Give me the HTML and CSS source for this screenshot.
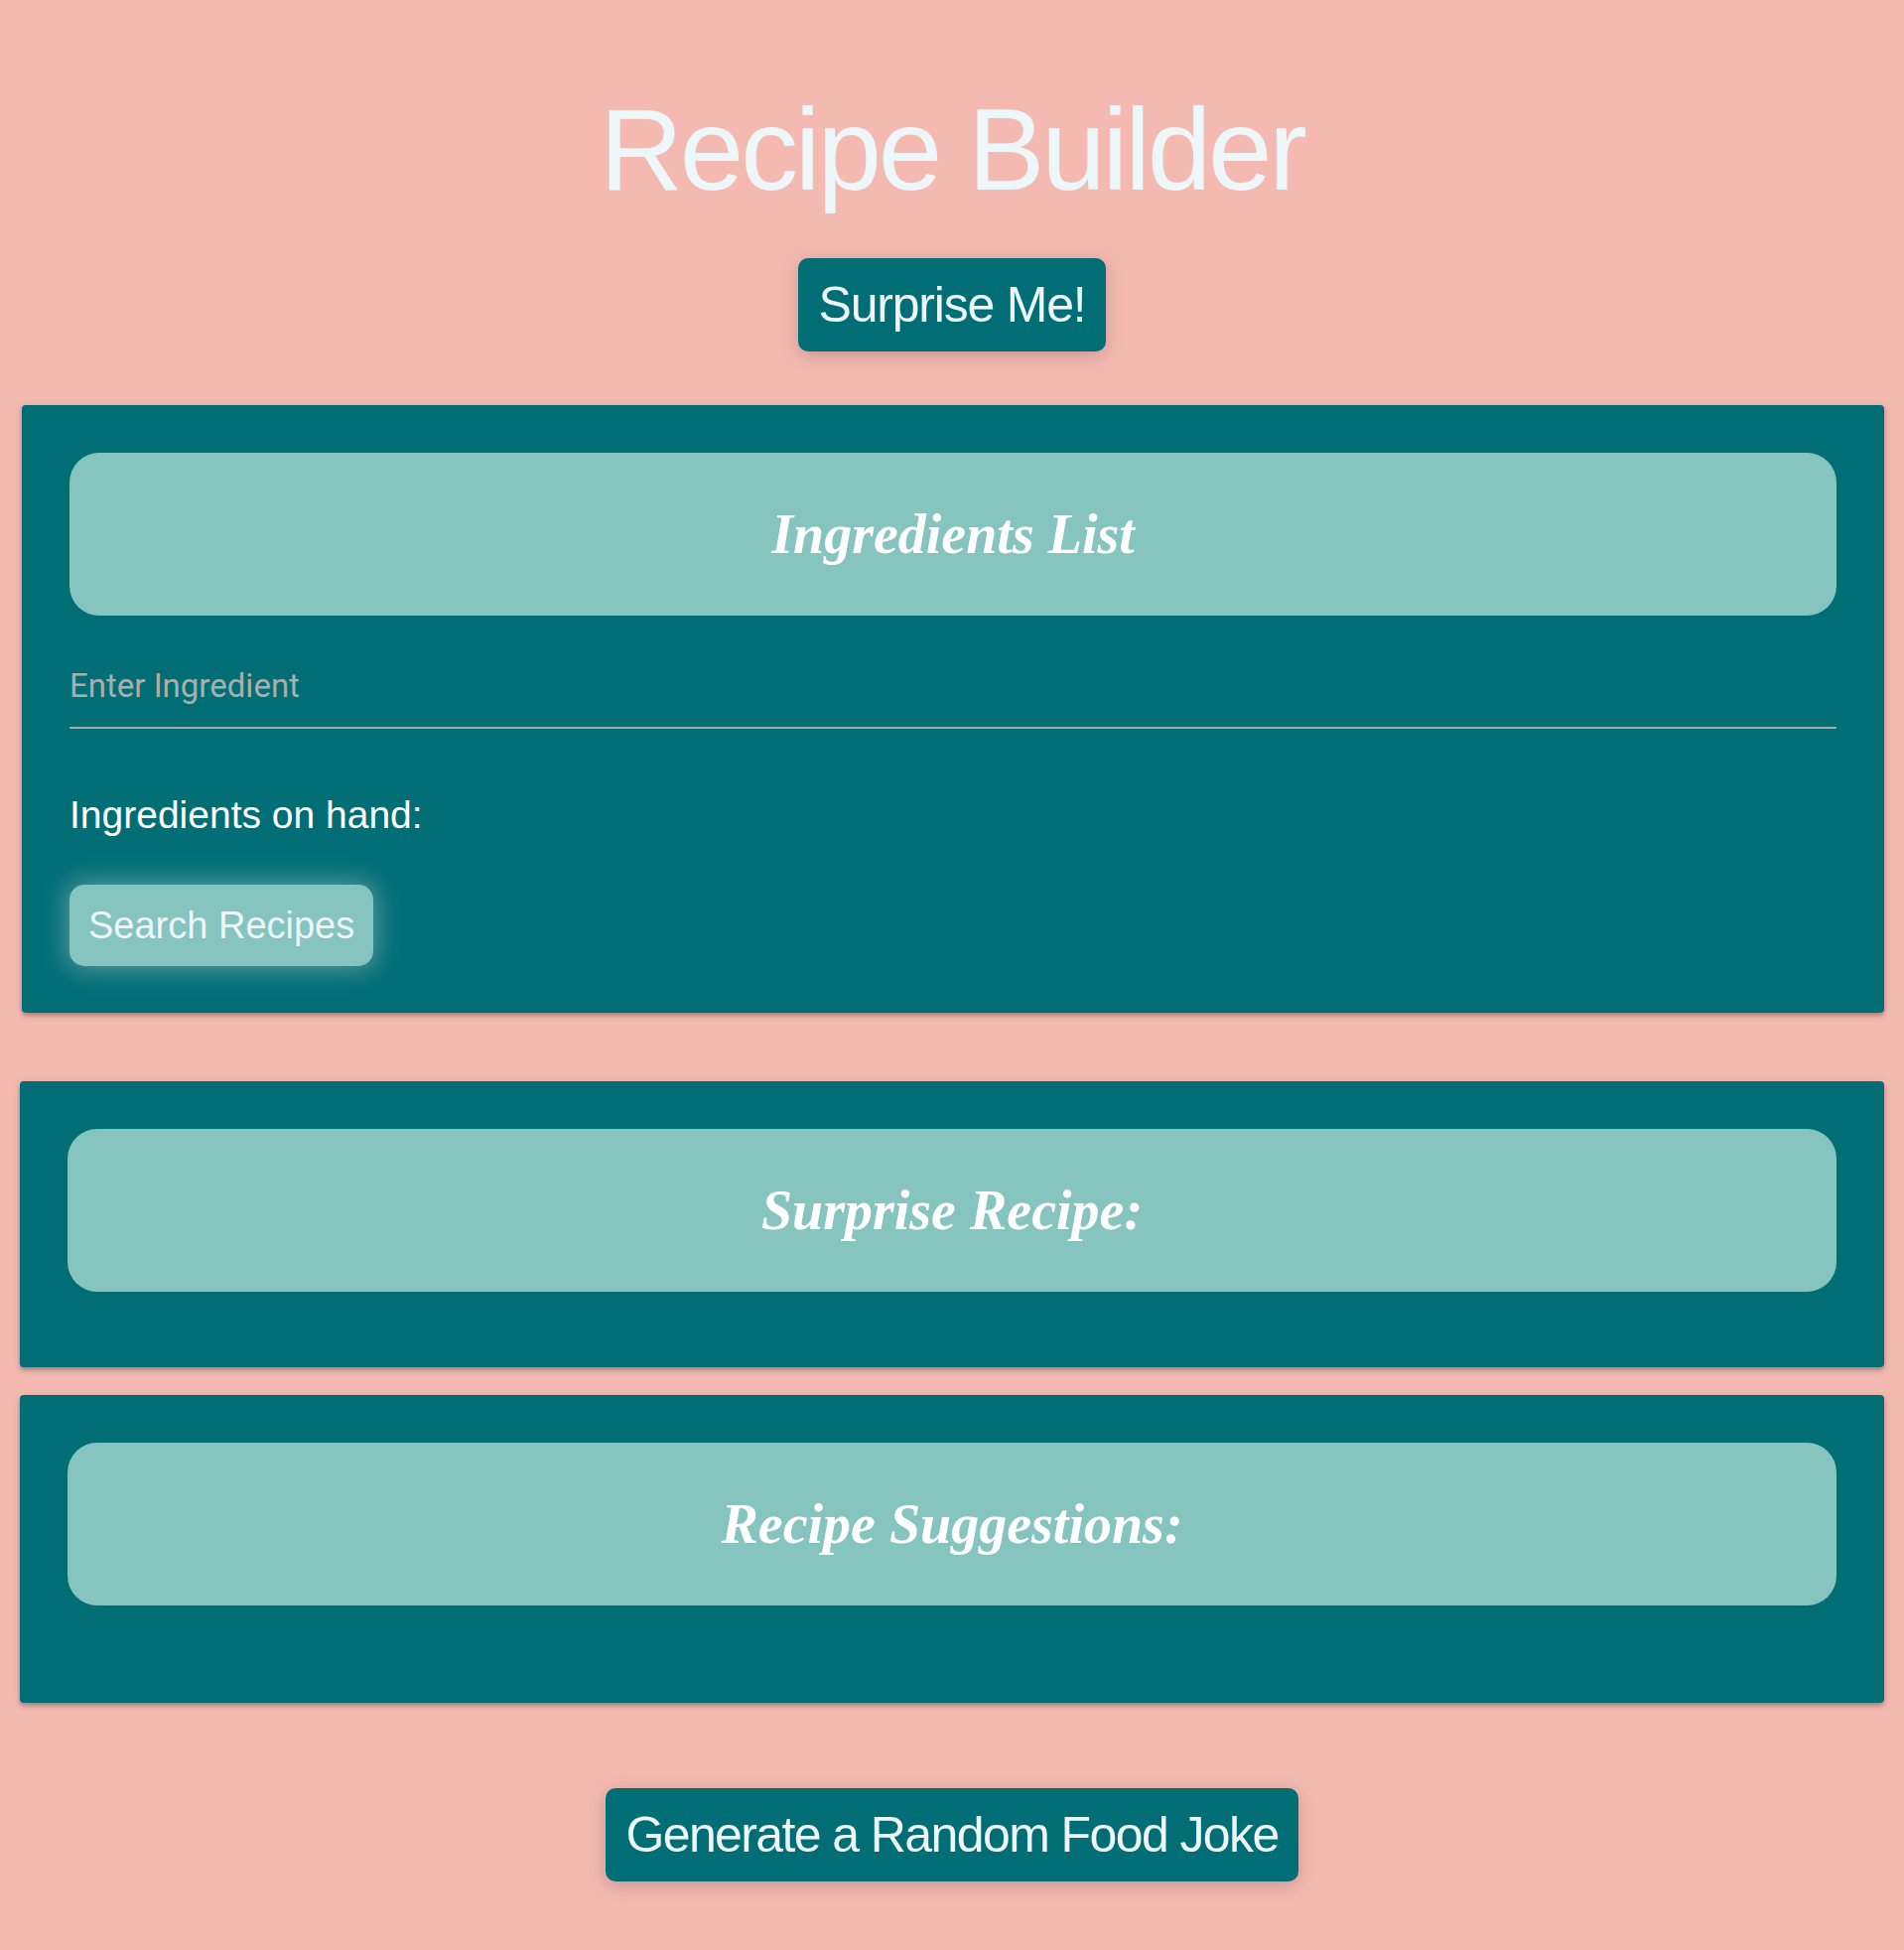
FILE: index.html
```html
<!DOCTYPE html>
<html lang="en">
<head>
<meta charset="utf-8">
<title>Recipe Builder</title>
<link rel="stylesheet" href="styles.css">
</head>
<body>
<div class="app">
  <header class="top">
    <h1 class="title">Recipe Builder</h1>
    <button class="btn-dark">Surprise Me!</button>
  </header>

  <section class="card card-first">
    <div class="card-head"><h2>Ingredients List</h2></div>
    <input class="ingredient-input" type="text" placeholder="Enter Ingredient">
    <p class="on-hand">Ingredients on hand:</p>
    <button class="btn-light">Search Recipes</button>
  </section>

  <section class="card card-surprise">
    <div class="card-head"><h2>Surprise Recipe:</h2></div>
  </section>

  <section class="card card-suggest">
    <div class="card-head"><h2>Recipe Suggestions:</h2></div>
  </section>

  <footer class="bottom">
    <button class="btn-dark btn-joke">Generate a Random Food Joke</button>
  </footer>
</div>
</body>
</html>
```

FILE: styles.css
```css
html, body {
  margin: 0;
  padding: 0;
}
body {
  background: #f4bab1;
  font-family: "Liberation Sans", Arial, sans-serif;
  min-height: 1964px;
}
.app {
  display: flex;
  flex-direction: column;
  padding: 0 20px 0 20px;
}
.top {
  display: flex;
  flex-direction: column;
  align-items: center;
  padding-top: 85px;
}
.title {
  margin: 0;
  font-family: "Liberation Sans", Arial, sans-serif;
  font-weight: 400;
  font-size: 116px;
  line-height: 133px;
  letter-spacing: -3.2px;
  color: #edf6f9;
}
.btn-dark {
  font-family: "Liberation Sans", Arial, sans-serif;
  font-size: 50px;
  letter-spacing: -1.2px;
  line-height: 58px;
  color: #edf6f9;
  background: #016e76;
  border: none;
  border-radius: 10px;
  padding: 18px 20px;
  box-shadow: 0 4px 18px rgba(90, 60, 60, 0.28);
}
.btn-joke {
  letter-spacing: -1.6px;
}
.top .btn-dark {
  margin-top: 42px;
}
.card {
  background: #016e76;
  border-radius: 4px;
  padding: 48px;
  box-shadow: 0 2px 4px -1px rgba(0,0,0,0.2), 0 4px 5px 0 rgba(0,0,0,0.14), 0 1px 10px 0 rgba(0,0,0,0.1);
  display: flex;
  flex-direction: column;
  align-items: flex-start;
}
.card-first {
  margin: 54px 0 0 2px;
  padding-bottom: 47px;
}
.card-surprise {
  margin-top: 69px;
  padding-bottom: 76px;
}
.card-suggest {
  margin-top: 28px;
  padding-bottom: 98px;
}
.card-head {
  align-self: stretch;
  height: 164px;
  background: #86c4bf;
  border-radius: 30px;
  display: flex;
  align-items: center;
  justify-content: center;
}
.card-head h2 {
  margin: 0;
  font-family: "Liberation Serif", "Times New Roman", serif;
  font-weight: 700;
  font-style: italic;
  font-size: 56px;
  color: #ffffff;
}
.ingredient-input {
  align-self: stretch;
  display: block;
  box-sizing: content-box;
  height: 38px;
  padding: 52px 0 22px;
  margin: 0;
  border: none;
  border-bottom: 2px solid #a5aaa8;
  background: transparent;
  outline: none;
  font-family: Roboto, "Liberation Sans", sans-serif;
  font-size: 33px;
  line-height: 38px;
  color: #ffffff;
}
.ingredient-input::placeholder {
  color: #a9afac;
  opacity: 1;
}
.on-hand {
  margin: 64px 0 0;
  font-size: 39px;
  line-height: 45px;
  color: #ffffff;
}
.btn-light {
  margin-top: 48px;
  font-family: "Liberation Sans", Arial, sans-serif;
  font-size: 38px;
  line-height: 44px;
  color: #edf6f9;
  background: #86c4bf;
  border: none;
  border-radius: 15px;
  padding: 19px 19px;
  box-shadow: 0 0 26px 4px rgba(190, 205, 205, 0.45);
}
.bottom {
  display: flex;
  justify-content: center;
  padding-top: 86px;
}
```
